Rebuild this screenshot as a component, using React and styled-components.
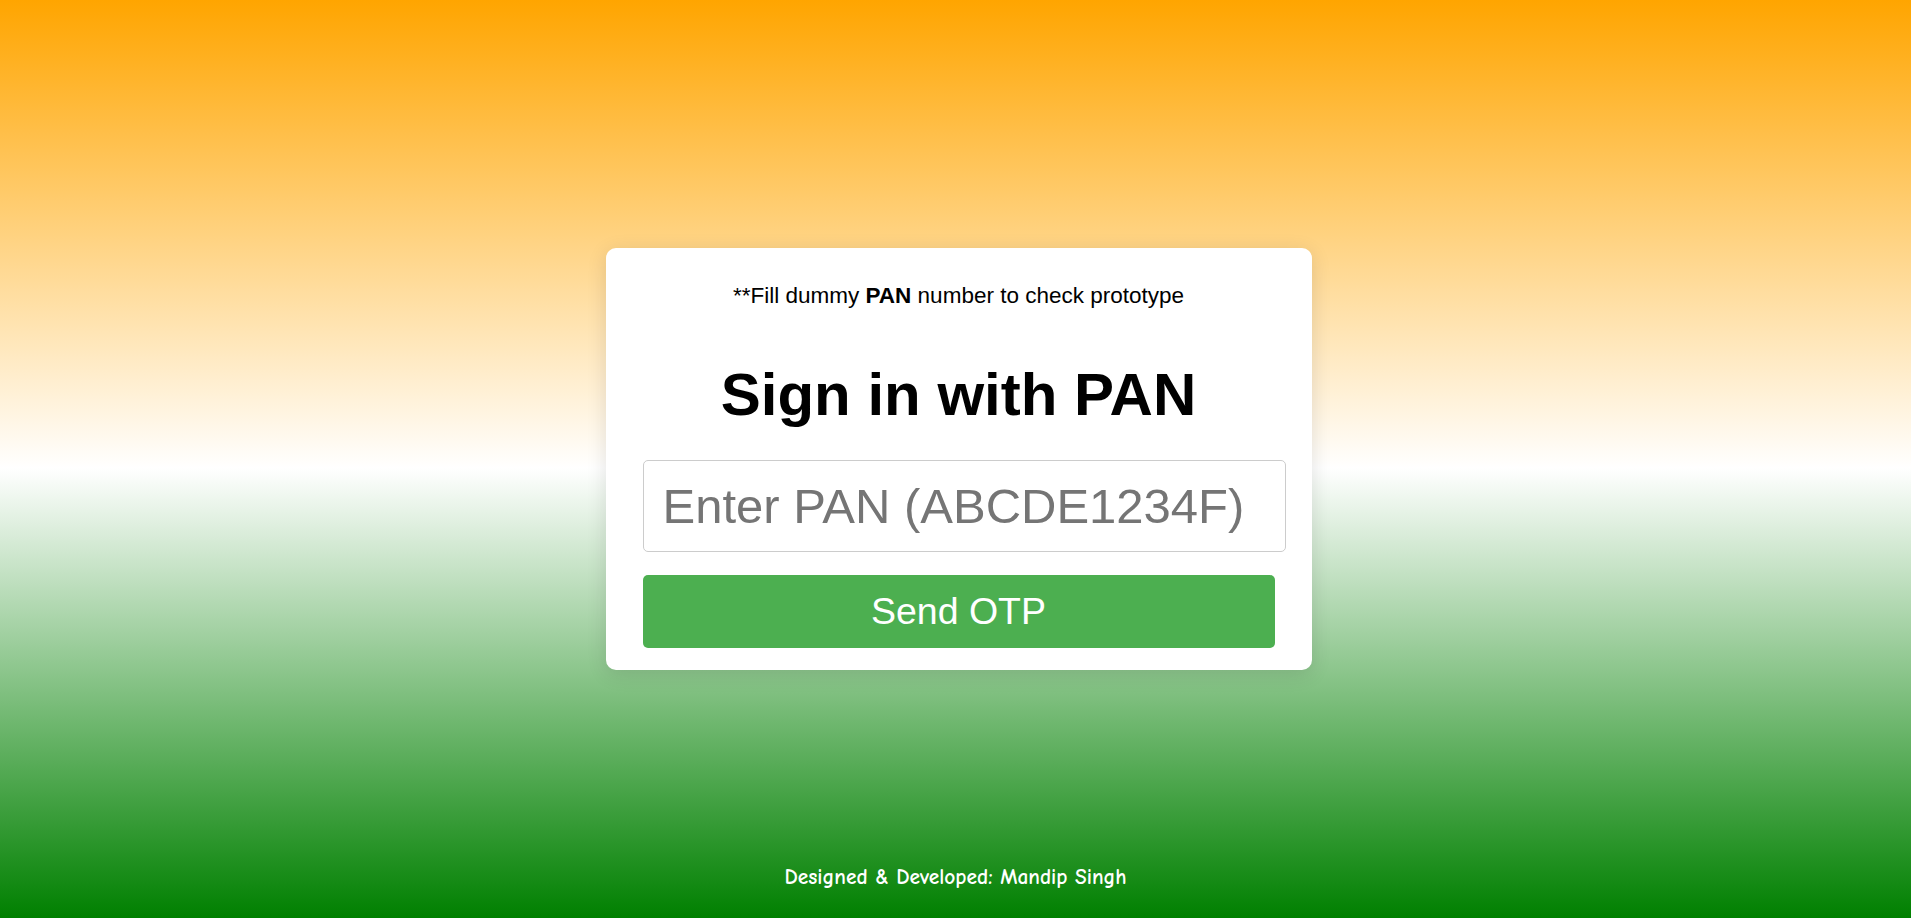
import React from 'react';
import styled, { createGlobalStyle } from 'styled-components';

const GlobalStyle = createGlobalStyle`
  html, body {
    margin: 0;
    padding: 0;
  }
  body {
    font-family: 'Liberation Sans', Arial, sans-serif;
  }
  * {
    box-sizing: border-box;
  }
`;

const Page = styled.div`
  /* tricolour background */
  min-height: 100vh;
  display: grid;
  grid-template-rows: 1fr auto 1fr;
  justify-items: center;
  background: linear-gradient(to bottom, #ffa500 0%, #ffffff 51%, #008000 100%);
`;

const Card = styled.div`
  grid-row: 2;
  width: 706px;
  margin-left: 6px;
  padding: 35px 37px 22px;
  background: #ffffff;
  border-radius: 10px;
  box-shadow: 0 4px 20px rgba(0, 0, 0, 0.12);
  display: flex;
  flex-direction: column;
  align-items: center;
`;

const Note = styled.p`
  margin: 0;
  font-size: 22.5px;
  line-height: 26px;
  color: #000;
`;

const Title = styled.h1`
  margin: 51px 0 30px;
  font-size: 60px;
  line-height: 70px;
  font-weight: bold;
  color: #000;
`;

const Form = styled.form`
  width: 100%;
  display: flex;
  flex-direction: column;
  align-items: flex-start;
  gap: 23px;
`;

const Input = styled.input`
  width: calc(100% + 11px);
  height: 92px;
  padding: 0 19px;
  border: 1px solid #cccccc;
  border-radius: 5px;
  font-family: 'Liberation Sans', Arial, sans-serif;
  font-size: 49px;
  color: #000;
  outline: none;
  &::placeholder {
    color: #757575;
  }
`;

const Button = styled.button`
  width: 100%;
  height: 73px;
  border: none;
  border-radius: 5px;
  background: #4caf50;
  color: #ffffff;
  font-family: 'Liberation Sans', Arial, sans-serif;
  font-size: 37.5px;
  cursor: pointer;
`;

const FooterRow = styled.div`
  grid-row: 3;
  align-self: end;
  padding-bottom: 28px;
`;

const Credit = styled.p`
  margin: 0;
  font-family: 'Comic Sans MS', 'Comic Neue', 'Noto Sans', sans-serif;
  font-size: 21.4px;
  font-weight: bold;
  line-height: 26px;
  color: #ffffff;
`;

function App() {
  const [pan, setPan] = React.useState('');

  const onSubmit = (e) => {
    e.preventDefault();
  };

  return (
    <>
      <GlobalStyle />
      <Page>
        <Card>
          <Note>
            **Fill dummy <b>PAN</b> number to check prototype
          </Note>
          <Title>Sign in with PAN</Title>
          <Form onSubmit={onSubmit}>
            <Input
              type="text"
              placeholder="Enter PAN (ABCDE1234F)"
              value={pan}
              onChange={(e) => setPan(e.target.value)}
            />
            <Button type="submit">Send OTP</Button>
          </Form>
        </Card>
        <FooterRow>
          <Credit>Designed &amp; Developed: Mandip Singh</Credit>
        </FooterRow>
      </Page>
    </>
  );
}

export default App;
